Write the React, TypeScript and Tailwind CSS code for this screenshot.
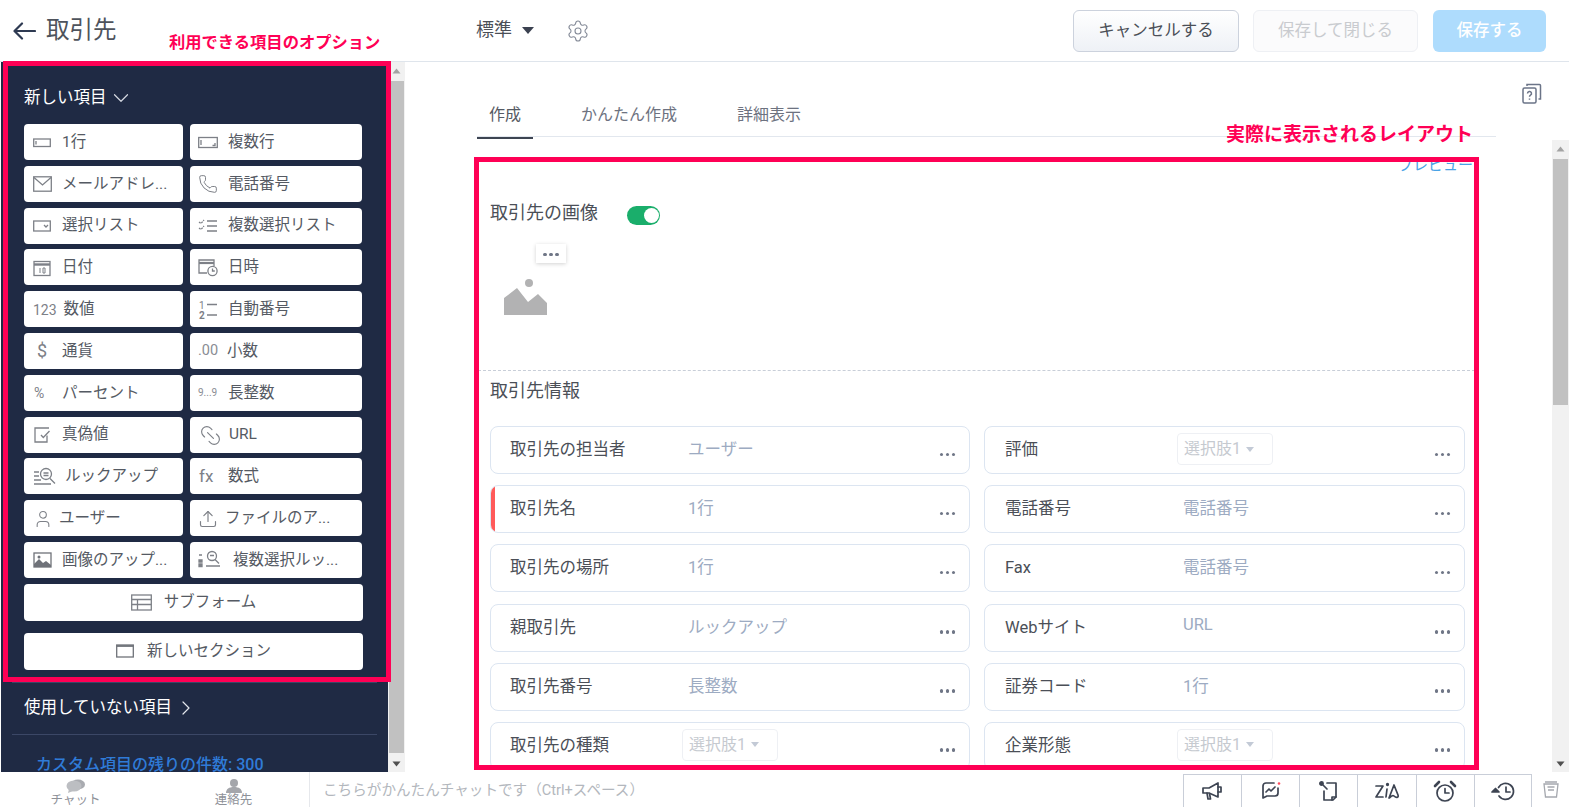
import React from "react";
import { Phone, User, Upload, ChevronDown, ChevronRight, Settings, Link2 } from "lucide-react";

const g = { fill: "none", stroke: "#7d8087", strokeWidth: 1.3 };

const IconSingle = () => (
  <svg width="18" height="18" viewBox="0 0 18 18" {...g}><rect x="0.7" y="5" width="16.6" height="7.5" /><path d="M3 7v3.5" /></svg>
);
const IconMail = () => (
  <svg width="19" height="16" viewBox="0 0 19 16" {...g}><rect x="0.7" y="0.8" width="17.6" height="14.4" /><path d="M1 1.500l8.500 7.500L18 1.500" /></svg>
);
const IconMulti = () => (
  <svg width="20" height="18" viewBox="0 0 20 18" {...g}><rect x="0.7" y="3.5" width="18.6" height="10" /><path d="M3 6v5M17 9v2.5h-2.5" /></svg>
);
const IconSelect = () => (
  <svg width="18" height="18" viewBox="0 0 18 18" {...g}><rect x="0.7" y="4" width="16.6" height="10" /><path d="M11 8l2 2 2-2" /></svg>
);
const IconMultiSelect = () => (
  <svg width="20" height="18" viewBox="0 0 20 18" {...g}><path d="M9 4h10M9 9h10M9 14h10" /><path d="M1 5l2 1.5L6 3M1 11l2 1.5L6 9" strokeDasharray="2 1" /></svg>
);
const IconDate = () => (
  <svg width="18" height="18" viewBox="0 0 18 18" {...g}><rect x="1" y="2.5" width="16" height="14" /><path d="M1 5.5h16" strokeWidth="2.4" /><path d="M7 9v5M10 9h2v5h-2z" strokeWidth="1" /></svg>
);
const IconDateTime = () => (
  <svg width="21" height="19" viewBox="0 0 21 19" {...g}><path d="M9 15H1V2h15v6" /><path d="M1 5h15" strokeWidth="2.2" /><circle cx="14.5" cy="13" r="4.6" /><path d="M14.5 10.5V13h2.3" /></svg>
);
const IconNumList = () => (
  <svg width="20" height="20" viewBox="0 0 20 20"><text x="1" y="8.500" fontSize="10" fill="#7d8087" fontFamily="Roboto">1</text><text x="1" y="19" fontSize="10" fontWeight="700" fill="#7d8087" fontFamily="Roboto">2</text><path d="M9 4.500h10M9 15h10" stroke="#7d8087" strokeWidth="1.300" /></svg>
);
const IconCheck = () => (
  <svg width="18" height="18" viewBox="0 0 18 18" {...g}><path d="M14 9.5V16H2V2h14" /><path d="M8 9l2.3 2.5L16.500 5" /></svg>
);
const IconLookup = () => (
  <svg width="24" height="20" viewBox="0 0 24 20" {...g}><circle cx="13" cy="7" r="5.5" /><path d="M10.5 6h5M10.5 8.500h5M17 11.500l5 5M1 5h5M1 9h5M1 13h7M1 17h17" /></svg>
);
const IconMultiLookup = () => (
  <svg width="22" height="20" viewBox="0 0 22 20" {...g}><circle cx="14" cy="6" r="4.500" /><path d="M12 5.500h4M17 9.500l4 4M8 16h14" /><path d="M1 5h3M1 10h3v2H1zM1 14h3v2.500H1z" fill="#7d8087" /></svg>
);
const IconImageUp = () => (
  <svg width="19" height="18" viewBox="0 0 19 18"><rect x="1" y="2" width="17" height="14" fill="none" stroke="#6f7279" strokeWidth="1.300" /><path d="M1 16v-3l5-5 4 4 3-2 5 4v2z" fill="#6f7279" /><circle cx="6" cy="6" r="1.500" fill="#6f7279" /></svg>
);
const IconSubform = () => (
  <svg width="21" height="17" viewBox="0 0 21 17" {...g}><rect x="0.700" y="1" width="19.600" height="15" /><path d="M0.700 5.500h19.600M0.700 10.500h19.600M6.500 5.500V16" /></svg>
);
const IconSection = () => (
  <svg width="18" height="14" viewBox="0 0 18 14" fill="none" stroke="#6f7279" strokeWidth="1.300"><rect x="0.700" y="1" width="16.600" height="12" /><path d="M0.700 2h16.600" strokeWidth="1.800" /></svg>
);
const Txt = ({ c }: { c: string }) => <span className="text-[14px] leading-none text-[#7d8087]">{c}</span>;

type Item = { label: string; icon: React.ReactNode; gap: string; extra?: string };

const left: Item[] = [
  { label: "1行", icon: <IconSingle />, gap: "ml-[11px]" },
  { label: "メールアドレ...", icon: <IconMail />, gap: "ml-[10px]" },
  { label: "選択リスト", icon: <IconSelect />, gap: "ml-[11px]" },
  { label: "日付", icon: <IconDate />, gap: "ml-[11px]" },
  { label: "数値", icon: <Txt c="123" />, gap: "ml-[7px]" },
  { label: "通貨", icon: <span className="w-[18px] text-center text-[18px] leading-none text-[#7d8087]">$</span>, gap: "ml-[11px]" },
  { label: "パーセント", icon: <span className="w-[18px] pl-[1px] text-[14px] leading-none text-[#7d8087]">%</span>, gap: "ml-[11px]" },
  { label: "真偽値", icon: <IconCheck />, gap: "ml-[11px]" },
  { label: "ルックアップ", icon: <IconLookup />, gap: "ml-[8px]" },
  { label: "ユーザー", icon: <User size={20} strokeWidth={1.3} color="#7d8087" />, gap: "ml-[6px]" },
  { label: "画像のアップ...", icon: <IconImageUp />, gap: "ml-[10px]" },
];
const right: Item[] = [
  { label: "複数行", icon: <IconMulti />, gap: "ml-[10px]" },
  { label: "電話番号", icon: <Phone size={20} strokeWidth={1.2} color="#7d8087" />, gap: "ml-[10px]" },
  { label: "複数選択リスト", icon: <IconMultiSelect />, gap: "ml-[10px]" },
  { label: "日時", icon: <IconDateTime />, gap: "ml-[9px]" },
  { label: "自動番号", icon: <IconNumList />, gap: "ml-[10px]" },
  { label: "小数", icon: <span className="w-[20px] text-[14.500px] leading-none text-[#8a8d94]">.00</span>, gap: "ml-[9px]" },
  { label: "長整数", icon: <span className="w-[20px] text-[10px] leading-none text-[#8a8d94]">9...9</span>, gap: "ml-[10px]" },
  { label: "URL", icon: <Link2 size={25} strokeWidth={1.1} color="#7d8087" className="rotate-45" />, gap: "ml-[6px]", extra: "h-[32px] self-start" },
  { label: "数式", icon: <span className="w-[20px] pl-[1px] text-[17px] leading-none text-[#7d8087]">fx</span>, gap: "ml-[10px]" },
  { label: "ファイルのア...", icon: <Upload size={20} strokeWidth={1.4} color="#7d8087" />, gap: "ml-[7px]" },
  { label: "複数選択ルッ...", icon: <IconMultiLookup />, gap: "ml-[13px]" },
];

const FieldBtn = ({ item, pad }: { item: Item; pad: string }) => (
  <div className={`flex items-center rounded-[4px] bg-white pt-[1px] text-[15.500px] text-[#555a63] whitespace-nowrap h-[36px] ${pad} ${item.extra ?? ""}`}>
    <span className="flex items-center justify-start">{item.icon}</span>
    <span className={item.gap}>{item.label}</span>
  </div>
);

type Field = { label: string; value?: string; select?: boolean; req?: boolean; up?: boolean };
const rows: [Field, Field][] = [
  [{ label: "取引先の担当者", value: "ユーザー" }, { label: "評価", select: true }],
  [{ label: "取引先名", value: "1行", req: true }, { label: "電話番号", value: "電話番号" }],
  [{ label: "取引先の場所", value: "1行" }, { label: "Fax", value: "電話番号" }],
  [{ label: "親取引先", value: "ルックアップ" }, { label: "Webサイト", value: "URL", up: true }],
  [{ label: "取引先番号", value: "長整数" }, { label: "証券コード", value: "1行" }],
  [{ label: "取引先の種類", select: true }, { label: "企業形態", select: true }],
];

const Dots = () => (
  <span className="flex gap-[2.500px]">
    <i className="block h-[3.500px] w-[3.500px] rounded-full bg-[#6f7686]" />
    <i className="block h-[3.500px] w-[3.500px] rounded-full bg-[#6f7686]" />
    <i className="block h-[3.500px] w-[3.500px] rounded-full bg-[#6f7686]" />
  </span>
);

const FieldRow = ({ f, col }: { f: Field; col: "l" | "r" }) => (
  <div className={`relative flex h-[48px] items-start overflow-hidden rounded-[8px] border border-[#dce5f1] bg-white pt-[11px] text-[16.5px] ${col === "l" ? "pl-[19px]" : "pl-[20px]"}`}>
    {f.req && <span className="absolute inset-y-0 left-0 w-[4px] bg-[#ff5a5a]" />}
    <span className="w-[178px] leading-[24px] text-[#4b4f57]">{f.label}</span>
    {f.select ? (
      <span className="-ml-[6px] -mt-[5px] flex h-[32px] w-[96px] items-center gap-[4px] rounded-[4px] border border-[#eef0f4] pl-[6px] text-[16px] text-[#c6cad0]">
        選択肢1
        <svg width="10" height="7" viewBox="0 0 10 7"><path d="M1 1h8L5 6z" fill="#c3cad6" /></svg>
      </span>
    ) : (
      <span className={`leading-[24px] text-[#9dabc2] ${f.up ? "-mt-[3px]" : ""}`}>{f.value}</span>
    )}
    <span className="absolute bottom-[17px] right-[14px]"><Dots /></span>
  </div>
);

const Scrollbar = ({ thumb }: { thumb: string }) => (
  <div className="flex h-full w-[17px] shrink-0 flex-col bg-[#f1f1f1]">
    <div className="flex h-[17px] items-center justify-center">
      <svg width="9" height="6" viewBox="0 0 9 6"><path d="M0.500 5.500L4.500 0.500l4 5z" fill="#a3a3a3" /></svg>
    </div>
    <div className={`mx-auto mt-[2px] w-[15px] bg-[#c1c1c1] ${thumb}`} />
    <div className="flex-1" />
    <div className="flex h-[17px] items-center justify-center">
      <svg width="9" height="6" viewBox="0 0 9 6"><path d="M0.500 0.500h8l-4 5z" fill="#505050" /></svg>
    </div>
  </div>
);

const dk = { fill: "none", stroke: "#3d4452", strokeWidth: 1.700, strokeLinecap: "round" as const, strokeLinejoin: "round" as const };

const bottomIcons = [
  <svg key="a" width="22" height="20" viewBox="0 0 22 20" {...dk}><path d="M2 7h6l9-5v14l-9-4H2z" /><path d="M17 6h3v5h-3M6 12l1 6h2.500l-1-5.500" /></svg>,
  <svg key="b" width="22" height="20" viewBox="0 0 22 20" {...dk}><path d="M14 2H6a3 3 0 0 0-3 3v12l4-2h8a3 3 0 0 0 3-3V7" /><path d="M6 11l3-3 2 2 4-4" /><circle cx="19" cy="2.500" r="1.300" fill="#ff4d5e" stroke="none" /></svg>,
  <svg key="c" width="22" height="20" viewBox="0 0 22 20" {...dk}><circle cx="3.500" cy="2.500" r="1.600" fill="#3d4452" /><path d="M5 4l4 4M6 10v9h9l3-3V2H9" /><path d="M14 19v-3h4" /></svg>,
  <svg key="d" width="26" height="20" viewBox="0 0 26 20" {...dk}><path d="M2 5h7l-7 11h7" /><path d="M12 16l1-8" /><circle cx="13.500" cy="3.500" r="0.800" /><path d="M15 17l5-13 4 10c1 3-2 3-4 1s-4 2-5 2z" /></svg>,
  <svg key="e" width="24" height="23" viewBox="0 0 24 23" {...dk}><circle cx="12" cy="13" r="8" /><path d="M12 8.500V13h4" /><path d="M2 6l4-4M22 6l-4-4" strokeWidth="2.600" /></svg>,
  <svg key="f" width="24" height="20" viewBox="0 0 24 20" {...dk}><path d="M7.500 6.500A8 8 0 1 1 8 15" /><path d="M15 6v5h4" /><path d="M1 11l3.500-3.500L8 11z" fill="#3d4452" /></svg>,
];

export default function App() {
  return (
    <div className="relative flex h-[807px] w-[1569px] flex-col overflow-hidden bg-white font-[Roboto,'Noto_Sans_CJK_JP',sans-serif] text-[#4b4f57]">
      {/* header */}
      <header className="flex h-[62px] shrink-0 items-center border-b border-[#dfe5ec]">
        <svg className="ml-[13px]" width="23" height="18" viewBox="0 0 23 18" fill="none" stroke="#2e3a52" strokeWidth="2.200" strokeLinecap="round" strokeLinejoin="round"><path d="M22 9H2M9 1.500L1.500 9 9 16.500" /></svg>
        <span className="ml-[10px] text-[23.500px] leading-none text-[#4e535c]">取引先</span>
        <span className="-mt-[2px] ml-[359.500px] text-[18px] leading-none text-[#4b4f57]">標準</span>
        <svg className="ml-[10px]" width="12" height="7" viewBox="0 0 12 7"><path d="M0 0h12L6 7z" fill="#3b4150" /></svg>
        <Settings size={24} strokeWidth={1.100} color="#858b98" className="ml-[32px]" />
        <div className="ml-auto mr-[23px] flex items-center">
          <button className="h-[42px] w-[166px] rounded-[6px] border border-[#ccd2dd] bg-gradient-to-b from-[#ffffff] to-[#eef1f6] pt-[1px] text-[16.5px] text-[#4b4f57]">キャンセルする</button>
          <button className="ml-[14px] h-[42px] w-[165px] rounded-[6px] border border-[#eef0f4] bg-[#fbfbfc] pt-[1px] text-[16.5px] text-[#c9cbcf]">保存して閉じる</button>
          <button className="ml-[15px] h-[42px] w-[113px] rounded-[6px] bg-[#aedcfd] pt-[1px] text-[16.5px] font-medium text-white">保存する</button>
        </div>
      </header>

      {/* body */}
      <div className="flex min-h-0 flex-1">
        <aside className="ml-[1px] w-[387px] shrink-0 overflow-hidden bg-[#1f2a44]">
          <div className="ml-[23px] mt-[26px] flex h-[20px] items-center text-[16.500px] text-white">
            新しい項目
            <ChevronDown size={26} strokeWidth={1.100} color="#d5d9e2" className="ml-[1px]" />
          </div>
          <div className="ml-[23px] mt-[16px] grid w-[338px] grid-cols-[159px_172px] gap-x-[7px] gap-y-[5.800px]">
            {left.map((it, i) => (
              <React.Fragment key={it.label}>
                <FieldBtn item={it} pad="pl-[9px]" />
                <FieldBtn item={right[i]} pad="pl-[8px]" />
              </React.Fragment>
            ))}
          </div>
          <div className="ml-[23px] mt-[6px] flex h-[37px] w-[339px] items-center justify-center rounded-[4px] bg-white text-[15.500px] text-[#555a63]">
            <IconSubform /><span className="ml-[12px]">サブフォーム</span>
          </div>
          <div className="ml-[23px] mt-[12px] flex h-[37px] w-[339px] items-center justify-center rounded-[4px] bg-white text-[15.500px] text-[#555a63]">
            <IconSection /><span className="ml-[13px]">新しいセクション</span>
          </div>
          <div className="mx-[11px] mt-[12px] h-[1px] bg-[#3b4766]" />
          <div className="ml-[23px] mt-[14px] flex h-[22px] items-center text-[16.500px] text-white">
            使用していない項目
            <ChevronRight size={24} strokeWidth={1.200} color="#e3e6ec" className="ml-[2px]" />
          </div>
          <div className="mx-[11px] mt-[15px] h-[1px] bg-[#3b4766]" />
          <div className="ml-[35px] mt-[19px] whitespace-nowrap text-[16px] font-medium leading-[22px] text-[#2f7bd8]">カスタム項目の残りの件数: 300</div>
        </aside>
        <Scrollbar thumb="h-[672px]" />

        <main className="flex min-w-0 flex-1">
          <div className="ml-[72px] flex h-full w-[1019px] shrink-0 flex-col overflow-hidden">
            <nav className="mt-[30px] flex h-[45px] shrink-0 items-center border-b border-[#e2e7ee] pt-[2px] text-[16px] text-[#6d7280]">
              <span className="relative flex h-[45px] w-[56px] items-center justify-center text-[#555a63]">
                作成
                <span className="absolute -bottom-[1px] left-0 right-0 h-[2px] bg-[#3d4452]" />
              </span>
              <span className="ml-[48px]">かんたん作成</span>
              <span className="ml-[60px]">詳細表示</span>
            </nav>
            <div className="w-[998px] shrink-0">
              <div className="mt-[17px] h-[22px] pr-[2px] text-right text-[15px] leading-[22px] text-[#4aa3e6]">プレビュー</div>
              <div className="ml-[13px] mt-[23px] flex h-[26px] items-center text-[18px] text-[#4b4f57]">
                取引先の画像
                <span className="relative ml-[29px] mt-[6px] block h-[19px] w-[33px] rounded-full bg-[#1aae6b]">
                  <span className="absolute right-[1.500px] top-[2px] h-[15px] w-[15px] rounded-full bg-white" />
                </span>
              </div>
              <div className="ml-[59px] mt-[19px] flex h-[19px] w-[30px] items-center justify-center bg-white pt-[2px] shadow-[0_1px_4px_rgba(0,0,0,0.18)]"><Dots /></div>
              <svg className="ml-[27px] mt-[16px]" width="44" height="36" viewBox="0 0 44 36"><circle cx="25" cy="4" r="4" fill="#b2b2b3" /><path d="M0 36V19L13 9l11 14 10-8 9 9v12z" fill="#b2b2b3" /></svg>
              <div className="ml-[1px] mt-[55px] border-t border-dashed border-[#c8ced8]" />
              <div className="ml-[13px] mt-[7px] text-[18px] leading-[26px] text-[#4b4f57]">取引先情報</div>
              <div className="ml-[13px] mt-[22px] grid w-[975px] grid-cols-[480px_481px] gap-x-[14px] gap-y-[11.200px]">
                {rows.map((r) => (
                  <React.Fragment key={r[0].label}>
                    <FieldRow f={r[0]} col="l" />
                    <FieldRow f={r[1]} col="r" />
                  </React.Fragment>
                ))}
              </div>
            </div>
          </div>
          <div className="flex w-[56px] shrink-0 justify-center pt-[21px]">
            <svg className="ml-[16px]" width="20" height="21" viewBox="0 0 20 21" fill="none" stroke="#6b7488" strokeWidth="1.500"><rect x="1" y="5" width="13" height="15" rx="1.500" /><path d="M5 3V1.500h12.500a1 1 0 0 1 1 1V16h-2" /><path d="M5.500 10.500a2 2 0 1 1 3 1.700c-.7.4-1 .8-1 1.500M7.500 15.500v1.200" /></svg>
          </div>
          <div className="flex h-full items-start pt-[78px]">
            <Scrollbar thumb="h-[246px]" />
          </div>
        </main>
      </div>

      {/* footer */}
      <footer className="flex h-[35px] shrink-0 bg-white">
        <div className="flex w-[151px] flex-col items-center pt-[7px]">
          <svg width="20" height="14" viewBox="0 0 20 14"><ellipse cx="12" cy="5.500" rx="7" ry="5" fill="#a9abb0" /><ellipse cx="8" cy="7" rx="7.500" ry="5.500" fill="#bcbec2" /><path d="M3 10l-1 4 5-2z" fill="#bcbec2" /></svg>
          <span className="text-[12.500px] leading-[14px] text-[#8e9198]">チャット</span>
        </div>
        <div className="flex w-[158px] flex-col items-center pl-[7px] pt-[7px]">
          <svg width="16" height="14" viewBox="0 0 16 14" fill="#a4a6ab"><circle cx="8" cy="4" r="4" /><path d="M0 14c0-4 3-6 8-6s8 2 8 6z" /></svg>
          <span className="text-[12.500px] leading-[14px] text-[#8e9198]">連絡先</span>
        </div>
        <div className="flex h-full flex-1 items-center border-l border-[#e6e8ec] pl-[13px] pt-[2px] text-[14.600px] text-[#b3b7bd]">こちらがかんたんチャットです（Ctrl+スペース）</div>
        <div className="mt-[2px] flex h-[33px]">
          {bottomIcons.map((ic, i) => (
            <div key={i} className="flex w-[58.200px] items-center justify-center border-l border-t border-[#c9ced8] last:border-r">{ic}</div>
          ))}
        </div>
        <div className="flex w-[37px] items-center justify-center">
          <svg width="18" height="17" viewBox="0 0 18 17" fill="none" stroke="#a5a8ae" strokeWidth="1.300"><path d="M2 3h14l-1.500 13h-11zM3 1h12" /><path d="M5.500 6h7M6 9h6" /></svg>
        </div>
      </footer>

      {/* annotations */}
      <span className="absolute left-[169px] top-[32px] whitespace-nowrap text-[16.300px] font-bold leading-[22px] text-[#ff0055]">利用できる項目のオプション</span>
      <span className="absolute left-[1226px] top-[123px] whitespace-nowrap text-[19px] font-bold leading-[24px] text-[#ff0055]">実際に表示されるレイアウト</span>
      <div className="pointer-events-none absolute left-[3px] top-[61px] h-[621px] w-[388px] border-[5px] border-[#ff0055]" />
      <div className="pointer-events-none absolute left-[474px] top-[157px] h-[613px] w-[1005px] border-[5px] border-[#ff0055]" />
    </div>
  );
}
